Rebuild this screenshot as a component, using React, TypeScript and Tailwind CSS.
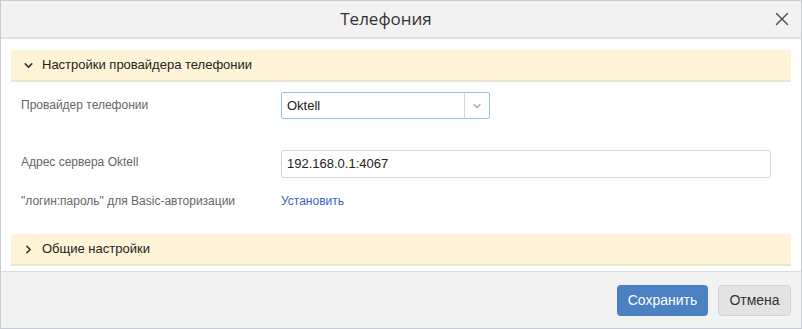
import { ChevronDown, ChevronRight, X } from 'lucide-react'

export default function App() {
  return (
    <div className="w-[802px] h-[329px] border border-[#c9cbd3] bg-white flex flex-col font-['Liberation_Sans',Arial,sans-serif] text-[13px]">
      {/* Header */}
      <div className="h-[38px] shrink-0 bg-[#f2f2f2] border-b-2 border-[#e0e0e0] flex items-center justify-center pr-[30px] relative">
        <span className="text-[17px] text-[#333] font-['Open_Sans',sans-serif]">Телефония</span>
        <button className="absolute right-[8px] top-[7px] text-[#555]">
          <X className="w-[22px] h-[22px]" strokeWidth={1.6} />
        </button>
      </div>

      {/* Body */}
      <div className="flex-1 px-[10px] pt-[11px]">
        <div className="h-[32px] bg-[#fff4d8] border-b-2 border-[#ede6d6] flex items-center pl-[11px] gap-[7px] text-[#222]">
          <ChevronDown className="w-[13px] h-[13px] text-[#333]" strokeWidth={3} />
          <span>Настройки провайдера телефонии</span>
        </div>

        <div className="flex items-center h-[27px] mt-[10px] pl-[10px] text-[12px]">
          <div className="w-[260px] text-[#666] mb-[2px]">Провайдер телефонии</div>
          <div className="w-[209px] h-[27px] border border-[#8fc3ea] rounded-[2px] flex items-center text-[13px]">
            <span className="flex-1 pl-[5px] text-[#222]">Oktell</span>
            <div className="w-[25px] h-full border-l border-[#d5d5d5] flex items-center justify-center">
              <ChevronDown className="w-[12px] h-[12px] text-[#aaa]" strokeWidth={2.5} />
            </div>
          </div>
        </div>

        <div className="flex items-center h-[27px] mt-[31px] pl-[10px] text-[12px]">
          <div className="w-[260px] text-[#666] mb-[4px]">Адрес сервера Oktell</div>
          <div className="w-[490px] h-[28px] border border-[#d6d6d6] rounded-[2px] flex items-center pl-[5px] text-[#222] text-[13px]">
            192.168.0.1:4067
          </div>
        </div>

        <div className="flex items-center mt-[14px] h-[20px] pl-[10px] text-[12px]">
          <div className="w-[260px] text-[#666]">"логин:пароль" для Basic-авторизации</div>
          <a className="text-[#3b5fc5] cursor-pointer">Установить</a>
        </div>

        <div className="h-[32px] mt-[23px] bg-[#fff4d8] border-b-2 border-[#ede6d6] flex items-center pl-[11px] gap-[7px] text-[#222]">
          <ChevronRight className="w-[13px] h-[13px] text-[#333]" strokeWidth={3} />
          <span>Общие настройки</span>
        </div>
      </div>

      {/* Footer */}
      <div className="h-[57px] shrink-0 bg-[#f2f2f2] border-t border-[#dcdcdc] flex items-center justify-end gap-[10px] pr-[10px]">
        <button className="h-[31px] w-[91px] rounded-[4px] bg-[#4b80c2] text-white text-[14px]">Сохранить</button>
        <button className="h-[31px] w-[73px] rounded-[4px] bg-[#e3e3e3] border border-[#d2d2d2] text-[#333] text-[14px]">Отмена</button>
      </div>
    </div>
  )
}
